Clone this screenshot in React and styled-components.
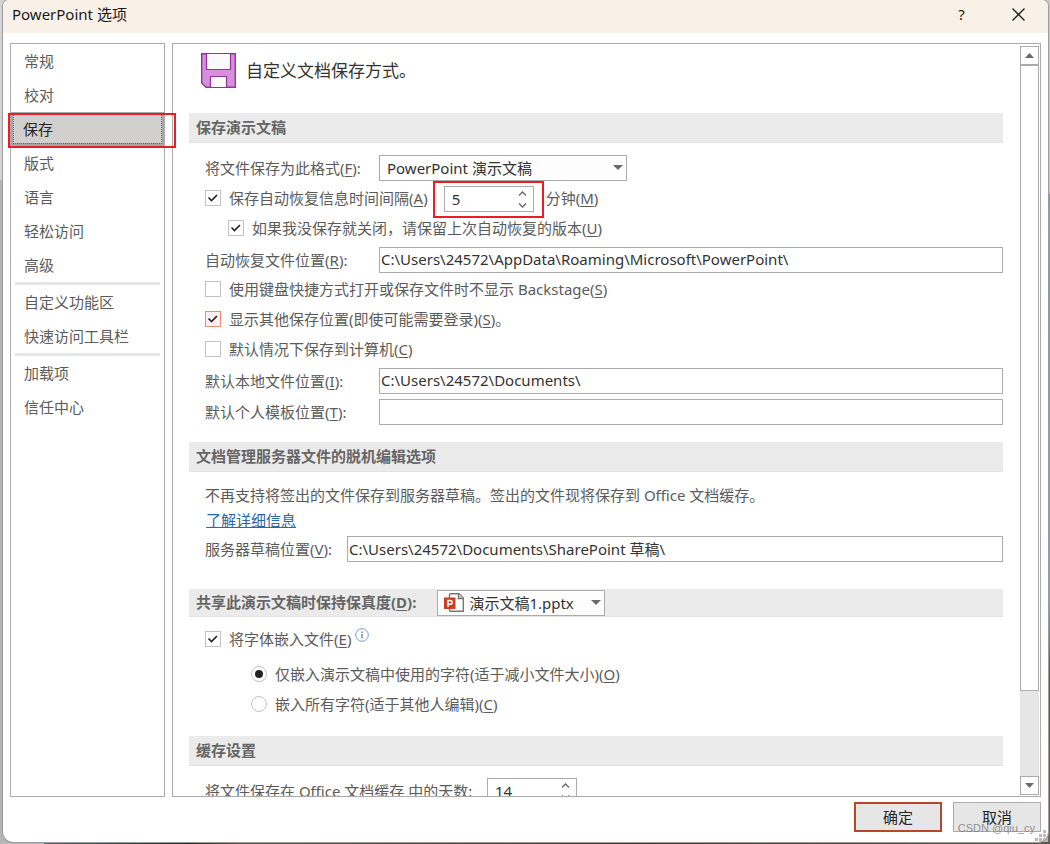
import React from 'react';
import styled, { createGlobalStyle } from 'styled-components';

const GlobalStyle = createGlobalStyle`
  * {
    box-sizing: border-box;
  }

  body {
    margin: 0;
    background: #b9b9b9;
    color: #5b5b5b;
    font-family: 'Noto Sans', 'Noto Sans CJK SC', sans-serif;
    font-size: 15px;
    line-height: 20px;
  }

  button, input, select {
    font: inherit;
    color: inherit;
  }

  u {
    text-underline-offset: 2px;
  }
`;

const Desktop = styled.div`
  height: 100vh;
  padding: 0 2px 2px 3px;
  background:
    linear-gradient(90deg, #b9b9b9 44px, #2f7a68 44px, #23251c 190px, #5d574b 240px, #3b372c 60%, #5d574b) bottom / 100% 2px no-repeat,
    linear-gradient(#c8c8c8 194px, #6f9fb8 194px, #7ba3b8 600px, #5f5a50 680px, #6a6459) right / 2px 100% no-repeat,
    linear-gradient(#d4d4d4 180px, #b5b5b5 180px);
`;

const Dialog = styled.div`
  display: flex;
  flex-direction: column;
  height: 100%;
  background: #fff;
  border-radius: 6px 6px 10px 10px;
  box-shadow: 0 0 0 1px #9c9c9c;
  overflow: hidden;
`;

const TitleBar = styled.header`
  display: flex;
  align-items: center;
  height: 33px;
  flex: none;
  padding: 0 1px 5px 9px;
  background: #f9f1e7;
  color: #1a1a1a;
`;

const Title = styled.h1`
  flex: 1;
  margin: 0;
  font-size: 15px;
  font-weight: 400;
`;

const TitleButton = styled.button`
  display: flex;
  align-items: center;
  justify-content: center;
  width: 57px;
  height: 28px;
  padding: 0;
  border: 0;
  background: none;
`;

const Body = styled.div`
  display: flex;
  flex: 1;
  gap: 7px;
  min-height: 0;
  padding: 10px 7px 0;
`;

const Sidebar = styled.nav`
  width: 155px;
  flex: none;
  border: 1px solid #ababab;
`;

const NavItem = styled.button`
  display: block;
  width: 100%;
  height: 34px;
  padding: 0 13px;
  border: 0;
  background: none;
  text-align: left;
`;

const SelectedItem = styled(NavItem)`
  padding: 0 10px;
  border: 2px solid #a6a6a6;
  border-bottom-width: 3px;
  background: #d2d0ce;
  color: #262626;
  outline: 1px dotted #666;
  outline-offset: -3px;
`;

const Divider = styled.hr`
  height: 3px;
  margin: 0 4px;
  border: 0;
  background: #e6e6e6;
`;

const Marked = styled.div`
  position: relative;

  &::after {
    content: '';
    position: absolute;
    inset: ${(props) => props.$inset};
    border: 2px solid #e81e25;
    pointer-events: none;
  }
`;

const MarkedSpinner = styled(Marked)`
  margin: 3px 12px 0 16px;
`;

const Panel = styled.main`
  display: flex;
  flex: 1;
  min-width: 0;
  border: 1px solid #ababab;
`;

const Content = styled.div`
  flex: 1;
  min-width: 0;
  padding: 0 17px 0 16px;
  overflow: hidden;
`;

const Intro = styled.div`
  display: flex;
  align-items: center;
  gap: 10px;
  height: 69px;
  padding: 0 12px 16px;
  color: #333;
  font-size: 17px;
`;

const Section = styled.section`
  padding-bottom: ${(props) => props.$space || 15}px;
`;

const SectionBar = styled.div`
  display: flex;
  align-items: center;
  gap: 21px;
  height: ${(props) => props.$height || 30}px;
  padding: 0 7px;
  border-bottom: 1px solid #e1e1e1;
  background: #ebebeb;
`;

const SectionTitle = styled.h2`
  margin: 0;
  padding-bottom: 2px;
  color: #666;
  font-size: 15px;
  font-weight: 700;
`;

const SectionBody = styled.div`
  padding: ${(props) => props.$top || 9}px 0 0 16px;
`;

const Field = styled.div`
  display: flex;
  align-items: center;
  padding: 3px 0 2px;
`;

const FieldLabel = styled.label`
  width: ${(props) => props.$width}px;
  flex: none;
`;

const TextInput = styled.input`
  flex: 1;
  min-width: 0;
  height: 26px;
  padding: 0 1px 2px;
  border: 1px solid #ababab;
  background: #fff;
  color: #333;
`;

const SelectBox = styled.div`
  position: relative;
  width: ${(props) => props.$width}px;
  height: 26px;
`;

const Select = styled.select`
  width: 100%;
  height: 100%;
  padding: 0 24px 0 ${(props) => props.$indent}px;
  border: 1px solid #ababab;
  border-radius: 0;
  background: #fdfdfd;
  color: #333;
  appearance: none;
`;

const SelectArrow = styled.svg`
  position: absolute;
  top: 10px;
  right: 4px;
  pointer-events: none;
`;

const FileIcon = styled.svg`
  position: absolute;
  top: 3px;
  left: 7px;
  pointer-events: none;
`;

const CheckRow = styled.div`
  display: flex;
  align-items: center;
  min-height: 30px;
  padding: 0 0 2px ${(props) => props.$indent || 0}px;
`;

const RadioGroup = styled.div`
  padding: 5px 0 0 46px;
`;

const CheckLabel = styled.label`
  display: flex;
  align-items: center;
  gap: 8px;
`;

const Box = styled.span`
  display: grid;
  width: 16px;
  height: 16px;

  input, svg {
    grid-area: 1 / 1;
    width: 16px;
    height: 16px;
    margin: 0;
  }

  input {
    appearance: none;
    border: 1px solid ${(props) => (props.$hot ? '#ee8a78' : '#c3c3c3')};
    background: ${(props) => (props.$hot ? '#fdf0ed' : '#fff')};
  }

  input[type='radio'] {
    border-radius: 50%;
  }

  svg {
    pointer-events: none;
  }
`;

const SpinBox = styled.div`
  display: flex;
  width: 90px;
  height: 26px;
  border: 1px solid #ababab;
  background: #fff;
`;

const SpinInput = styled.input`
  flex: 1;
  min-width: 0;
  padding: 0 0 0 7px;
  border: 0;
  background: none;
  color: #333;
`;

const SpinButtons = styled.div`
  display: flex;
  flex-direction: column;
  width: 21px;

  button {
    display: flex;
    flex: 1;
    align-items: center;
    justify-content: center;
    padding: 0;
    border: 0;
    background: none;
  }
`;

const Note = styled.p`
  margin: 0;
  padding: 4px 0 2px;
`;

const Link = styled.a`
  display: inline-block;
  padding: 3px 1px;
  color: #2a66a8;
`;

const InfoIcon = styled.svg`
  margin: 0 0 8px 4px;
`;

const ScrollBar = styled.div`
  display: flex;
  flex-direction: column;
  width: 19px;
  flex: none;
  margin: 2px 1px 1px 0;
  background: #e6e6e6;
`;

const ScrollButton = styled.button`
  display: flex;
  align-items: center;
  justify-content: center;
  height: 19px;
  flex: none;
  padding: 0;
  border: 1px solid #ababab;
  background: #fff;
`;

const ScrollTrack = styled.div`
  flex: 1;
`;

const ScrollThumb = styled.div`
  height: 88%;
  border: 1px solid #ababab;
  background: #fff;
`;

const Footer = styled.footer`
  position: relative;
  display: flex;
  justify-content: flex-end;
  gap: 11px;
  flex: none;
  padding: 5px 7px 10px;
`;

const FooterButton = styled.button`
  width: 88px;
  height: 30px;
  padding: 0;
  border: ${(props) => (props.$primary ? '2px solid #b7472a' : '1px solid #ababab')};
  background: #e6e6e6;
  color: #262626;
`;

const Watermark = styled.span`
  position: absolute;
  right: 13px;
  bottom: 4px;
  color: rgba(120, 120, 120, 0.8);
  font-family: 'Liberation Sans', sans-serif;
  font-size: 11px;
  pointer-events: none;
`;

const Grip = styled.svg`
  position: absolute;
  right: 2px;
  bottom: 1px;
`;

function Key({ children }) {
  return (
    <>
      (<u>{children}</u>)
    </>
  );
}

function Check({ type = 'checkbox', checked, hot, name, children }) {
  return (
    <CheckLabel>
      <Box $hot={hot}>
        <input type={type} name={name} defaultChecked={checked} />
        {checked && (
          <svg viewBox="0 0 16 16">
            {type === 'radio' ? (
              <circle cx="8" cy="8" r="4" fill="#222" />
            ) : (
              <path d="M3.5 7.5 6.5 10.5 12 5" fill="none" stroke="#222" strokeWidth="1.6" />
            )}
          </svg>
        )}
      </Box>
      <span>{children}</span>
    </CheckLabel>
  );
}

function Dropdown({ id, width, indent, value, children }) {
  return (
    <SelectBox $width={width}>
      <Select id={id} $indent={indent} defaultValue={value}>
        <option>{value}</option>
      </Select>
      {children}
      <SelectArrow width="10" height="6" viewBox="0 0 10 6">
        <path d="M0 0h10L5 5z" fill="#6a6a6a" />
      </SelectArrow>
    </SelectBox>
  );
}

function Spinner({ id, value }) {
  return (
    <SpinBox>
      <SpinInput id={id} defaultValue={value} />
      <SpinButtons>
        <button type="button" aria-label="增加">
          <svg width="9" height="5" viewBox="0 0 9 5">
            <path d="M1 4.5 4.5 1 8 4.5" fill="none" stroke="#666" strokeWidth="1.3" />
          </svg>
        </button>
        <button type="button" aria-label="减少">
          <svg width="9" height="5" viewBox="0 0 9 5">
            <path d="M1 .5 4.5 4 8 .5" fill="none" stroke="#666" strokeWidth="1.3" />
          </svg>
        </button>
      </SpinButtons>
    </SpinBox>
  );
}

function PathField({ id, label, hotkey, width, value }) {
  return (
    <Field>
      <FieldLabel htmlFor={id} $width={width}>
        {label}
        <Key>{hotkey}</Key>:
      </FieldLabel>
      <TextInput id={id} defaultValue={value} />
    </Field>
  );
}

function SaveIcon() {
  return (
    <svg width="35" height="35" viewBox="0 0 35 35">
      <path d="M.7.7h33.600v33.600H5L.7 30z" fill="#d590d9" stroke="#9332a0" strokeWidth="1.400" />
      <path d="M5.500.5h24v16h-24z" fill="#fafafa" stroke="#9332a0" strokeWidth="1.200" />
      <path d="M9.500 34.500v-11h16v11z" fill="#fafafa" stroke="#9332a0" strokeWidth="1.200" />
    </svg>
  );
}

function App() {
  return (
    <Desktop>
      <GlobalStyle />
      <Dialog>
        <TitleBar>
          <Title>PowerPoint 选项</Title>
          <TitleButton type="button">?</TitleButton>
          <TitleButton type="button" aria-label="关闭">
            <svg width="13" height="13" viewBox="0 0 13 13">
              <path d="M.5.5l12 12M12.500.5l-12 12" stroke="#1a1a1a" strokeWidth="1.300" />
            </svg>
          </TitleButton>
        </TitleBar>

        <Body>
          <Sidebar>
            <NavItem>常规</NavItem>
            <NavItem>校对</NavItem>
            <Marked $inset="1px -12px -2px -3px">
              <SelectedItem>保存</SelectedItem>
            </Marked>
            <NavItem>版式</NavItem>
            <NavItem>语言</NavItem>
            <NavItem>轻松访问</NavItem>
            <NavItem>高级</NavItem>
            <Divider />
            <NavItem>自定义功能区</NavItem>
            <NavItem>快速访问工具栏</NavItem>
            <Divider />
            <NavItem>加载项</NavItem>
            <NavItem>信任中心</NavItem>
          </Sidebar>

          <Panel>
            <Content>
              <Intro>
                <SaveIcon />
                自定义文档保存方式。
              </Intro>

              <Section>
                <SectionBar>
                  <SectionTitle>保存演示文稿</SectionTitle>
                </SectionBar>
                <SectionBody>
                  <Field>
                    <FieldLabel htmlFor="format" $width={174}>
                      将文件保存为此格式<Key>F</Key>:
                    </FieldLabel>
                    <Dropdown id="format" width={248} indent={7} value="PowerPoint 演示文稿" />
                  </Field>
                  <CheckRow>
                    <Check checked>
                      保存自动恢复信息时间间隔<Key>A</Key>
                    </Check>
                    <MarkedSpinner $inset="-5px -10px -6px -11px">
                      <Spinner id="minutes" value="5" />
                    </MarkedSpinner>
                    <label htmlFor="minutes">
                      分钟<Key>M</Key>
                    </label>
                  </CheckRow>
                  <CheckRow $indent={23}>
                    <Check checked>
                      如果我没保存就关闭，请保留上次自动恢复的版本<Key>U</Key>
                    </Check>
                  </CheckRow>
                  <PathField
                    id="recover"
                    label="自动恢复文件位置"
                    hotkey="R"
                    width={174}
                    value="C:\Users\24572\AppData\Roaming\Microsoft\PowerPoint\"
                  />
                  <CheckRow>
                    <Check>
                      使用键盘快捷方式打开或保存文件时不显示 Backstage<Key>S</Key>
                    </Check>
                  </CheckRow>
                  <CheckRow>
                    <Check checked hot>
                      显示其他保存位置(即使可能需要登录)<Key>S</Key>。
                    </Check>
                  </CheckRow>
                  <CheckRow>
                    <Check>
                      默认情况下保存到计算机<Key>C</Key>
                    </Check>
                  </CheckRow>
                  <PathField
                    id="local"
                    label="默认本地文件位置"
                    hotkey="I"
                    width={174}
                    value="C:\Users\24572\Documents\"
                  />
                  <PathField id="template" label="默认个人模板位置" hotkey="T" width={174} value="" />
                </SectionBody>
              </Section>

              <Section $space={25}>
                <SectionBar>
                  <SectionTitle>文档管理服务器文件的脱机编辑选项</SectionTitle>
                </SectionBar>
                <SectionBody>
                  <Note>不再支持将签出的文件保存到服务器草稿。签出的文件现将保存到 Office 文档缓存。</Note>
                  <Link href="#more">了解详细信息</Link>
                  <PathField
                    id="server"
                    label="服务器草稿位置"
                    hotkey="V"
                    width={142}
                    value="C:\Users\24572\Documents\SharePoint 草稿\"
                  />
                </SectionBody>
              </Section>

              <Section $space={16}>
                <SectionBar $height={28}>
                  <SectionTitle>
                    <label htmlFor="share">
                      共享此演示文稿时保持保真度<Key>D</Key>:
                    </label>
                  </SectionTitle>
                  <Dropdown id="share" width={168} indent={31} value="演示文稿1.pptx">
                    <FileIcon width="20" height="20" viewBox="0 0 20 20">
                      <path
                        d="M5.500 5V1.500Q5.500.7 6.500.7H15l4.300 4.300v13.300H6.500q-1 0-1-1V15"
                        fill="#fff"
                        stroke="#777"
                        strokeWidth="1.400"
                      />
                      <path d="M14.500.7v4.800h4.800" fill="#ddd" stroke="#777" strokeWidth="1.400" />
                      <path d="M0 4.500h11.500v11.500H0z" fill="#c8401f" />
                      <path d="M4 14V7.500h2.200a1.900 1.900 0 0 1 0 3.800H4" fill="none" stroke="#fff" strokeWidth="1.500" />
                    </FileIcon>
                  </Dropdown>
                </SectionBar>
                <SectionBody $top={8}>
                  <CheckRow>
                    <Check checked>
                      将字体嵌入文件<Key>E</Key>
                    </Check>
                    <InfoIcon width="14" height="14" viewBox="0 0 14 14">
                      <circle cx="7" cy="7" r="6.300" fill="none" stroke="#7b9bd0" />
                      <path d="M7 6v4.500M7 3.500V5" stroke="#4472c4" strokeWidth="1.200" />
                    </InfoIcon>
                  </CheckRow>
                  <RadioGroup>
                    <CheckRow>
                      <Check type="radio" name="embed" checked>
                        仅嵌入演示文稿中使用的字符(适于减小文件大小)<Key>O</Key>
                      </Check>
                    </CheckRow>
                    <CheckRow>
                      <Check type="radio" name="embed">
                        嵌入所有字符(适于其他人编辑)<Key>C</Key>
                      </Check>
                    </CheckRow>
                  </RadioGroup>
                </SectionBody>
              </Section>

              <Section>
                <SectionBar>
                  <SectionTitle>缓存设置</SectionTitle>
                </SectionBar>
                <SectionBody>
                  <Field>
                    <FieldLabel htmlFor="days" $width={282}>
                      将文件保存在 Office 文档缓存 中的天数:
                    </FieldLabel>
                    <Spinner id="days" value="14" />
                  </Field>
                </SectionBody>
              </Section>
            </Content>

            <ScrollBar>
              <ScrollButton type="button" aria-label="向上滚动">
                <svg width="9" height="5" viewBox="0 0 9 5">
                  <path d="M0 5h9L4.500 0z" fill="#6a6a6a" />
                </svg>
              </ScrollButton>
              <ScrollTrack>
                <ScrollThumb />
              </ScrollTrack>
              <ScrollButton type="button" aria-label="向下滚动">
                <svg width="9" height="5" viewBox="0 0 9 5">
                  <path d="M0 0h9L4.500 5z" fill="#6a6a6a" />
                </svg>
              </ScrollButton>
            </ScrollBar>
          </Panel>
        </Body>

        <Footer>
          <FooterButton type="button" $primary>
            确定
          </FooterButton>
          <FooterButton type="button">取消</FooterButton>
          <Watermark>CSDN @qiu_cy</Watermark>
          <Grip width="11" height="11" viewBox="0 0 11 11">
            <path d="M8 0h3v3H8zM4 4h3v3H4zM8 4h3v3H8zM0 8h3v3H0zM4 8h3v3H4zM8 8h3v3H8z" fill="#b9b9b9" />
          </Grip>
        </Footer>
      </Dialog>
    </Desktop>
  );
}

export default App;
